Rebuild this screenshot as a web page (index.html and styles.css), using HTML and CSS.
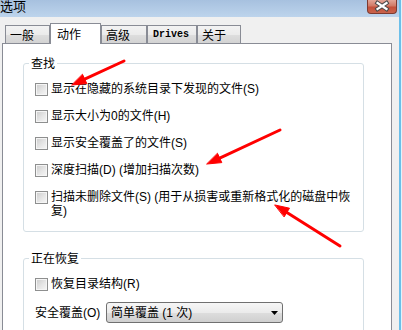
FILE: index.html
```html
<!DOCTYPE html>
<html lang="zh-CN">
<head>
<meta charset="utf-8">
<title>选项</title>
<link rel="stylesheet" href="styles.css">
</head>
<body>
<div class="window">
  <div class="titlebar">
    <span class="title">选项</span>
    <div class="close">
      <svg width="30" height="14" viewBox="0 0 30 14">
        <path d="M10.5 3 L19.5 9 M19.5 3 L10.5 9" stroke="#4a4a4a" stroke-width="4.2" stroke-linecap="square" fill="none"/>
        <path d="M10.5 3 L19.5 9 M19.5 3 L10.5 9" stroke="#ffffff" stroke-width="2.2" stroke-linecap="square" fill="none"/>
      </svg>
    </div>
  </div>

  <div class="tabs">
    <div class="tab tab-general">一般</div>
    <div class="tab tab-action tab-active">动作</div>
    <div class="tab tab-advanced">高级</div>
    <div class="tab tab-drives">Drives</div>
    <div class="tab tab-about">关于</div>
  </div>

  <div class="panel">
    <fieldset class="group">
      <legend>查找</legend>
      <label class="check"><span class="cb"></span><span class="text">显示在隐藏的系统目录下发现的文件(S)</span></label>
      <label class="check"><span class="cb"></span><span class="text">显示大小为0的文件(H)</span></label>
      <label class="check"><span class="cb"></span><span class="text">显示安全覆盖了的文件(S)</span></label>
      <label class="check"><span class="cb"></span><span class="text">深度扫描(D) (增加扫描次数)</span></label>
      <label class="check"><span class="cb"></span><span class="text text-wrap">扫描未删除文件(S) (用于从损害或重新格式化的磁盘中恢复)</span></label>
    </fieldset>

    <fieldset class="group group-restore">
      <legend>正在恢复</legend>
      <label class="check"><span class="cb"></span><span class="text">恢复目录结构(R)</span></label>
      <div class="field">
        <span class="field-label">安全覆盖(O)</span>
        <div class="combo">
          <span class="combo-value">简单覆盖 (1 次)</span>
          <svg class="combo-arrow" width="7" height="4" viewBox="0 0 7 4"><polygon points="0,0 7,0 3.5,4" fill="#000"/></svg>
        </div>
      </div>
    </fieldset>
  </div>

  <svg class="annotations" width="402" height="330" viewBox="0 0 402 330">
    <g stroke="#ff0000" stroke-width="3" stroke-linecap="round" fill="#ff0000">
      <line x1="124" y1="61" x2="84.7" y2="79.1"/>
      <polygon points="72,85 86.8,83.6 82.6,74.6" stroke-width="1"/>
      <line x1="280" y1="130" x2="219.7" y2="158.1"/>
      <polygon points="207,164 221.8,162.6 217.6,153.6" stroke-width="1"/>
      <line x1="340" y1="246" x2="286.9" y2="212.4"/>
      <polygon points="275,205 289.5,208.2 284.3,216.6" stroke-width="1"/>
    </g>
  </svg>
</div>
</body>
</html>
```

FILE: styles.css
```css
html, body {
  margin: 0;
  padding: 0;
  background: #f0f0f0;
  overflow: hidden;
}

.window {
  position: relative;
  width: 402px;
  height: 330px;
  box-sizing: border-box;
  padding-right: 3px;
  display: flex;
  flex-direction: column;
  background: #f0f0f0;
  box-shadow: inset -1px 0 0 #e2f2fb, inset -3px 0 0 #6cbfe9;
  overflow: hidden;
  font-family: "Liberation Sans", "Noto Sans CJK SC", sans-serif;
  font-size: 12px;
  color: #000;
}

/* title bar */
.titlebar {
  height: 17px;
  flex: none;
  display: flex;
  justify-content: space-between;
  align-items: flex-start;
  background: linear-gradient(#a7c1df, #bdd4ec);
}

.title {
  font-family: "Noto Sans CJK SC", sans-serif;
  font-size: 13px;
  line-height: 13px;
  margin-top: -1px;
  color: #000;
}

.close {
  width: 30px;
  height: 14px;
  margin-right: 2px;
  box-sizing: border-box;
  border: 1px solid #7d3a30;
  border-top: none;
  border-radius: 0 0 4px 4px;
  background: linear-gradient(#e3a597, #d17a66 45%, #c5503a 55%, #c9634c);
  position: relative;
}

.close svg {
  position: absolute;
  left: -1px;
  top: 0;
}

/* tabs */
.tabs {
  flex: none;
  height: 20px;
  margin-top: 6px;
  padding-left: 5px;
  display: flex;
  align-items: flex-end;
}

.tab {
  box-sizing: border-box;
  height: 18px;
  padding-left: 4px;
  border: 1px solid #898c95;
  border-bottom: none;
  background: linear-gradient(#f3f3f3, #ebebeb 50%, #dedede 51%, #d3d3d3);
  font-family: "Noto Sans CJK SC", sans-serif;
  font-size: 12px;
  line-height: 17px;
  white-space: nowrap;
}

.tab-general { width: 45px; }
.tab-action { width: 51px; }
.tab-advanced { width: 46px; }
.tab-drives {
  width: 50px;
  padding-left: 5px;
  font-family: "Liberation Mono", monospace;
  font-size: 10px;
  font-weight: bold;
}
.tab-about { width: 44px; }

.tab-active {
  height: 21px;
  margin-bottom: -1px;
  padding-left: 6px;
  background: #fff;
  position: relative;
  z-index: 1;
  line-height: 19px;
}

/* panel */
.panel {
  flex: 1;
  width: 390px;
  margin-left: 2px;
  box-sizing: border-box;
  border: 1px solid #898c95;
  background: #fff;
  padding: 12px 0 0 20px;
}

.group {
  margin: 0;
  width: 341px;
  box-sizing: border-box;
  min-width: 0;
  border: 1px solid #d5dfe5;
  border-radius: 3px;
  padding: 12px 11px 13px 11px;
}

.group legend {
  margin-left: -6px;
  padding: 0 2px;
  font-family: "Noto Sans CJK SC", sans-serif;
  line-height: 14px;
}

.group-restore {
  margin-top: 19px;
}

.check {
  display: flex;
  align-items: flex-start;
  gap: 3px;
  line-height: 14px;
}

.check + .check {
  margin-top: 13px;
}

.cb {
  flex: none;
  width: 13px;
  height: 13px;
  margin-top: 1px;
  box-sizing: border-box;
  border: 1px solid #8e8f8f;
  background: linear-gradient(135deg, #cbcbcb, #e6e6e6 55%, #f7f7f7);
  box-shadow: inset 0 0 0 1px #f5f5f5;
}

.text {
  white-space: nowrap;
}

.text-wrap {
  white-space: normal;
  max-width: 305px;
}

.field {
  margin-top: 11px;
  display: flex;
  align-items: center;
  height: 21px;
}

.field-label {
  width: 71px;
  flex: none;
  line-height: 14px;
  white-space: nowrap;
}

.combo {
  width: 177px;
  height: 21px;
  box-sizing: border-box;
  border: 1px solid #707070;
  border-radius: 3px;
  background: linear-gradient(#f6f6f6, #ebebeb 50%, #dddddd 51%, #cfcfcf);
  display: flex;
  align-items: center;
  justify-content: space-between;
  padding: 0 4px 0 4px;
}

.combo-value {
  line-height: 14px;
  white-space: nowrap;
}

.combo-arrow {
  display: block;
  margin-top: 1px;
}

.annotations {
  position: absolute;
  left: 0;
  top: 0;
  pointer-events: none;
  z-index: 5;
}
```
